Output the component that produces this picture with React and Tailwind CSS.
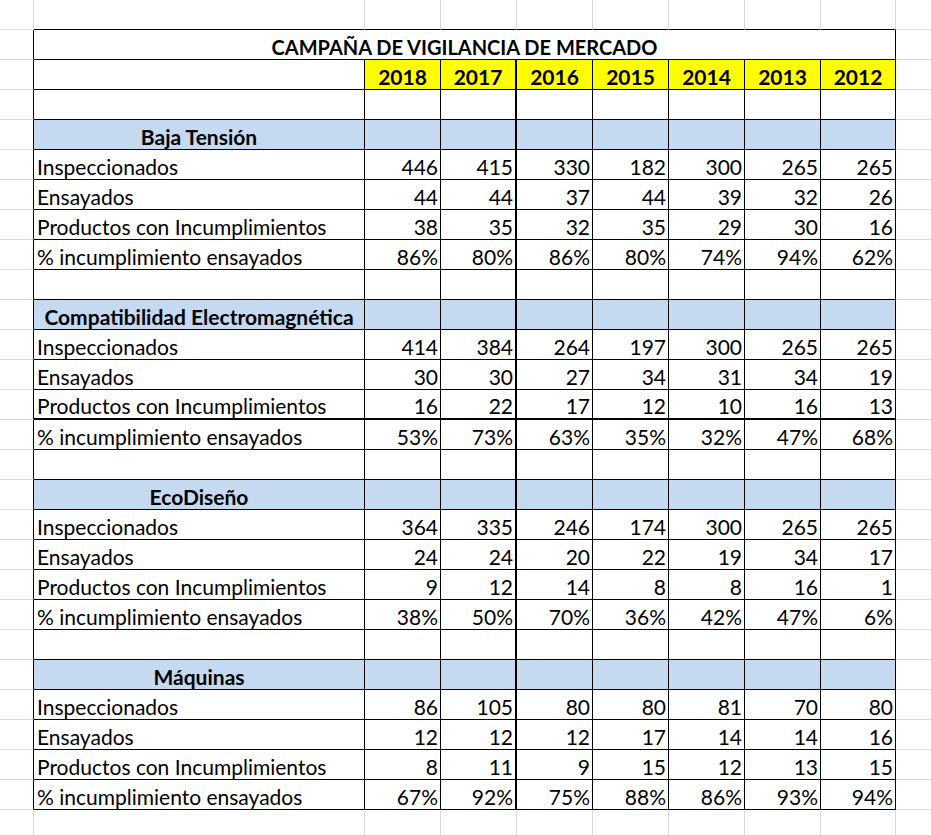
import React from "react";

const years = ["2018", "2017", "2016", "2015", "2014", "2013", "2012"];

const sections = [
  {
    title: "Baja Tensión",
    rows: [
      ["Inspeccionados", "446", "415", "330", "182", "300", "265", "265"],
      ["Ensayados", "44", "44", "37", "44", "39", "32", "26"],
      ["Productos con Incumplimientos", "38", "35", "32", "35", "29", "30", "16"],
      ["% incumplimiento ensayados", "86%", "80%", "86%", "80%", "74%", "94%", "62%"],
    ],
  },
  {
    title: "Compatibilidad Electromagnética",
    thickAfter: 2,
    rows: [
      ["Inspeccionados", "414", "384", "264", "197", "300", "265", "265"],
      ["Ensayados", "30", "30", "27", "34", "31", "34", "19"],
      ["Productos con Incumplimientos", "16", "22", "17", "12", "10", "16", "13"],
      ["% incumplimiento ensayados", "53%", "73%", "63%", "35%", "32%", "47%", "68%"],
    ],
  },
  {
    title: "EcoDiseño",
    rows: [
      ["Inspeccionados", "364", "335", "246", "174", "300", "265", "265"],
      ["Ensayados", "24", "24", "20", "22", "19", "34", "17"],
      ["Productos con Incumplimientos", "9", "12", "14", "8", "8", "16", "1"],
      ["% incumplimiento ensayados", "38%", "50%", "70%", "36%", "42%", "47%", "6%"],
    ],
  },
  {
    title: "Máquinas",
    rows: [
      ["Inspeccionados", "86", "105", "80", "80", "81", "70", "80"],
      ["Ensayados", "12", "12", "12", "17", "14", "14", "16"],
      ["Productos con Incumplimientos", "8", "11", "9", "15", "12", "13", "15"],
      ["% incumplimiento ensayados", "67%", "92%", "75%", "88%", "86%", "93%", "94%"],
    ],
  },
];

// spreadsheet cell outside the table: grey gridlines, black where it touches the table
const Outside = ({ right, bottom }) => (
  <div
    className={`border-r border-b ${right ? "border-r-black" : "border-r-[#dadada]"} ${
      bottom ? "border-b-black" : "border-b-[#dadada]"
    }`}
  />
);

const Cell = ({ children, col, thick, className = "" }) => (
  <div
    className={`flex items-end pb-[2px] whitespace-nowrap border-black border-b ${thick ? "border-b-2" : ""} ${
      col === 1 ? "border-r-2" : "border-r"
    } ${className}`}
  >
    {children}
  </div>
);

const App = () => {
  return (
    <div className="w-[932px] h-[835px] overflow-hidden bg-white font-['Lato',sans-serif] text-[21px] leading-none text-black">
      <div className="grid grid-cols-[34px_331px_76px_76px_76px_76px_76px_76px_75px_1fr] auto-rows-[30px]">
        {/* top spare row */}
        <Outside />
        {[0, 1, 2, 3, 4, 5, 6, 7].map((i) => (
          <Outside key={i} bottom />
        ))}
        <Outside />

        {/* title */}
        <Outside right />
        <div className="col-span-8 flex items-end justify-center pb-[2px] border-r border-b border-black font-bold text-[20px]">
          CAMPAÑA DE VIGILANCIA DE MERCADO
        </div>
        <Outside />

        {/* years */}
        <Outside right />
        <Cell />
        {years.map((y, i) => (
          <Cell key={y} col={i} className="justify-center bg-[#ffff00] font-bold">
            {y}
          </Cell>
        ))}
        <Outside />

        {sections.map((s) => (
          <React.Fragment key={s.title}>
            <Outside right />
            <Cell />
            {years.map((y, i) => (
              <Cell key={y} col={i} />
            ))}
            <Outside />

            <Outside right />
            <Cell className="justify-center bg-[#c5d9f1] font-bold">{s.title}</Cell>
            {years.map((y, i) => (
              <Cell key={y} col={i} className="bg-[#c5d9f1]" />
            ))}
            <Outside />

            {s.rows.map((r, ri) => (
              <React.Fragment key={r[0]}>
                <Outside right />
                <Cell thick={s.thickAfter === ri} className="pl-[3px]">
                  {r[0]}
                </Cell>
                {r.slice(1).map((v, i) => (
                  <Cell key={i} col={i} thick={s.thickAfter === ri} className="justify-end pr-[2px]">
                    {v}
                  </Cell>
                ))}
                <Outside />
              </React.Fragment>
            ))}
          </React.Fragment>
        ))}

        {/* bottom spare row */}
        {[0, 1, 2, 3, 4, 5, 6, 7, 8, 9].map((i) => (
          <Outside key={i} />
        ))}
      </div>
    </div>
  );
};

export default App;
